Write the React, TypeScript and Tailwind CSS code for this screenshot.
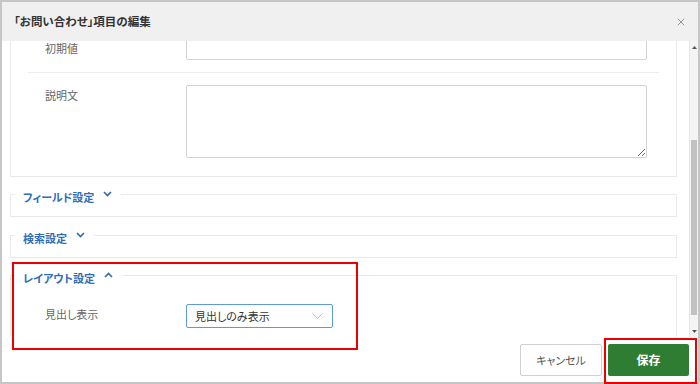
import { X } from "lucide-react";

function Chevron({ up }: { up?: boolean }) {
  return (
    <svg width="9" height="6" viewBox="0 0 9 6" className="ml-[9px] mt-[1px] shrink-0">
      <path
        d={up ? "M1 5 L4.5 1.5 L8 5" : "M1 1 L4.5 4.5 L8 1"}
        fill="none"
        stroke="#2f6db5"
        strokeWidth="1.7"
      />
    </svg>
  );
}

function Section({
  title,
  open,
  children,
  className,
}: {
  title: string;
  open?: boolean;
  children: React.ReactNode;
  className?: string;
}) {
  return (
    <fieldset className={`border border-[#e9e9e9] ${className ?? ""}`}>
      <legend className="ml-[4px] pl-[8px] pr-[9px] pt-[6px] flex items-start text-[11px] leading-[14px] font-bold text-[#2f6db5]">
        <span>{title}</span>
        <Chevron up={open} />
      </legend>
      {children}
    </fieldset>
  );
}

function Scrollbar() {
  return (
    <div className="w-[9px] flex flex-col bg-[#f4f4f4] border-l border-[#e6e6e6]">
      <div className="h-[12px] flex items-center justify-center">
        <svg width="5" height="3" viewBox="0 0 5 3">
          <path d="M0 3 L2.5 0 L5 3 Z" fill="#555" />
        </svg>
      </div>
      <div className="flex-1">
        <div className="mt-[87px] mx-[1px] h-[175px] bg-[#c1c1c1]" />
      </div>
      <div className="h-[12px] flex items-center justify-center">
        <svg width="5" height="3" viewBox="0 0 5 3">
          <path d="M0 0 L2.5 3 L5 0 Z" fill="#555" />
        </svg>
      </div>
    </div>
  );
}

export default function App() {
  return (
    <div className="relative w-[700px] h-[384px] border-2 border-[#c6c6c6] bg-white flex flex-col font-['Noto_Sans_CJK_JP','Noto_Sans',sans-serif] [font-feature-settings:'palt']">
      {/* ヘッダー */}
      <div className="h-[39px] bg-[#f0f0f0] flex items-center justify-between pl-[12px] pr-[11px]">
        <h1 className="text-[11.5px] font-bold text-[#333]">「お問い合わせ」項目の編集</h1>
        <X size={12} strokeWidth={1.6} className="text-[#7a7a7a]" />
      </div>

      {/* 本体（スクロール領域） */}
      <div className="h-[296px] flex">
        <div className="flex-1 overflow-hidden pl-[8px] pr-[12px]">
          {/* 基本設定パネル（上部はスクロールで隠れている） */}
          <div className="border-x border-b border-[#e9e9e9] pb-[18px]">
            <div className="mx-[17px]">
              <div className="-mt-[5px] flex items-center">
                <div className="w-[158px] pl-[17px] text-[11px] leading-[12px] text-[#666]">初期値</div>
                <div className="flex-1 mr-[12px] h-[24px] border border-[#d3d3d3] rounded-[2px] bg-white" />
              </div>
              <div className="mt-[12px] h-px bg-[#ececec]" />
              <div className="mt-[12px] flex items-start">
                <div className="w-[158px] pl-[17px] text-[11px] leading-[20px] text-[#666]">説明文</div>
                <textarea className="flex-1 mr-[12px] h-[73px] border border-[#d3d3d3] rounded-[2px] bg-white outline-none" />
              </div>
            </div>
          </div>

          <Section title="フィールド設定" className="mt-[7px]">
            <div className="h-[12px]" />
          </Section>

          <Section title="検索設定" className="mt-[8px]">
            <div className="h-[12px]" />
          </Section>

          <Section title="レイアウト設定" open className="mt-[7px]">
            <div className="mx-[17px] mt-[19px] pb-[9px] flex items-center">
              <div className="w-[158px] pl-[17px] text-[11px] leading-[20px] -mt-[4px] text-[#666]">見出し表示</div>
              <div className="w-[147px] h-[24px] border border-[#5d9bd8] rounded-[2px] bg-white flex items-center justify-between pl-[8px] pr-[9px]">
                <span className="text-[11px] text-[#333]">見出しのみ表示</span>
                <svg width="11" height="6" viewBox="0 0 11 6">
                  <path d="M0.5 0.5 L5.5 5.5 L10.5 0.5" fill="none" stroke="#bdbdbd" strokeWidth="1" />
                </svg>
              </div>
            </div>
          </Section>
        </div>
        <Scrollbar />
      </div>

      {/* フッター */}
      <div className="flex-1 flex items-center justify-end gap-[6px] pr-[9px] pt-[1px]">
        <button className="w-[82px] h-[32px] border border-[#d0d0d0] rounded-[2px] bg-white text-[11px] text-[#555]">
          キャンセル
        </button>
        <button className="w-[81px] h-[32px] rounded-[2px] bg-[#2e7d32] text-[12px] font-bold text-white">
          保存
        </button>
      </div>

      {/* 注記の赤枠 */}
      <div className="absolute left-[10px] top-[260px] w-[346px] h-[88px] border-2 border-[#ee0000] pointer-events-none" />
      <div className="absolute left-[602px] top-[336px] w-[93px] h-[46px] border-2 border-[#ee0000] pointer-events-none" />
    </div>
  );
}
